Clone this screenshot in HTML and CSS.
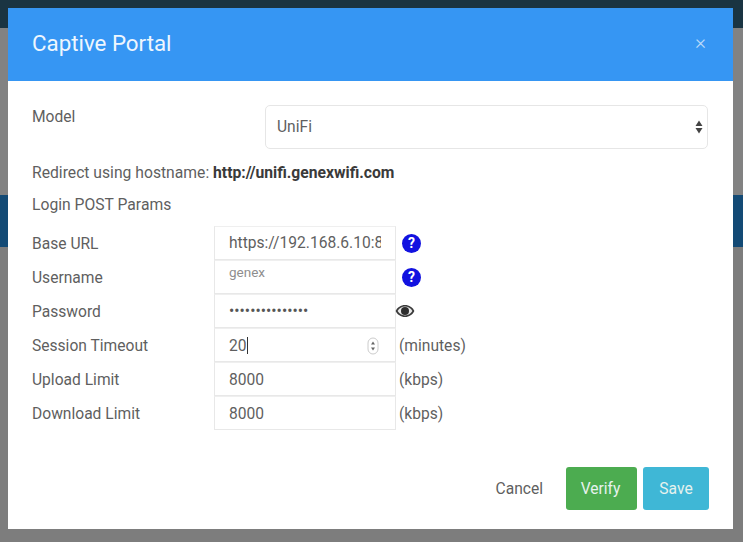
FILE: index.html
```html
<!DOCTYPE html>
<html lang="en">
<head>
<meta charset="utf-8">
<title>Captive Portal</title>
<link rel="stylesheet" href="styles.css">
</head>
<body>
<div class="backdrop">
  <div class="band band-top"></div>
  <div class="band band-gray"></div>
  <div class="band band-blue"></div>
  <div class="band band-rest"></div>
</div>
<div class="modal">
  <header class="modal-header">
    <h1 class="modal-title">Captive Portal</h1>
    <span class="close">×</span>
  </header>
  <div class="modal-body">
    <div class="model-row">
      <span class="model-label">Model</span>
      <div class="select"><span>UniFi</span>
        <svg class="select-arrows" width="8" height="14" viewBox="0 0 8 14"><path d="M4 0.5L7.5 6H0.5ZM4 13.5L0.5 8H7.5Z" fill="#444"/></svg>
      </div>
    </div>
    <p class="line redirect">Redirect using hostname: <b>http://unifi.genexwifi.com</b></p>
    <p class="line params">Login POST Params</p>
    <div class="grid">
      <span class="label">Base URL</span>
      <div class="field field-url"><span class="clip">https://192.168.6.10:8</span></div>
      <div class="after"><span class="help">?</span></div>

      <span class="label">Username</span>
      <div class="field field-user">genex</div>
      <div class="after"><span class="help">?</span></div>

      <span class="label">Password</span>
      <div class="field field-pass">•••••••••••••••</div>
      <div class="after after-eye">
        <svg width="20" height="14" viewBox="0 0 20 14"><path d="M10 1C5.8 1 2.3 3.4 0.6 7 2.3 10.6 5.8 13 10 13S17.7 10.6 19.4 7C17.7 3.4 14.2 1 10 1Z" fill="#3a3a3a"/><path d="M10 2.6C6.8 2.6 4.2 4.4 2.6 7 4.2 9.6 6.8 11.4 10 11.4S15.8 9.6 17.4 7C15.8 4.4 13.2 2.6 10 2.6Z" fill="#e8e8e8"/><circle cx="10" cy="7" r="4" fill="#2e2e2e"/></svg>
      </div>

      <span class="label">Session Timeout</span>
      <div class="field field-num">
        <span>20<i class="caret"></i></span>
        <span class="spin"><svg width="12" height="18" viewBox="0 0 12 18"><rect x="1" y="1" width="10" height="16" rx="5" fill="none" stroke="#ccc"/><path d="M6 4.5L8 7.5H4ZM6 13.5L4 10.5H8Z" fill="#666"/></svg></span>
      </div>
      <div class="after after-unit">(minutes)</div>

      <span class="label">Upload Limit</span>
      <div class="field">8000</div>
      <div class="after after-unit">(kbps)</div>

      <span class="label">Download Limit</span>
      <div class="field">8000</div>
      <div class="after after-unit">(kbps)</div>
    </div>
    <footer class="actions">
      <span class="cancel">Cancel</span>
      <span class="btn btn-verify">Verify</span>
      <span class="btn btn-save">Save</span>
    </footer>
  </div>
</div>
</body>
</html>
```
FILE: styles.css
```css
* { box-sizing: border-box; }
html, body { margin: 0; height: 100%; }
body { width: 743px; height: 542px; position: relative; overflow: hidden; font-family: Roboto, "Liberation Sans", sans-serif; color: #5f5f5f; font-size: 15.6px; }
.backdrop { display: flex; flex-direction: column; height: 542px; }
.band-top { height: 28px; background: #1a3442; }
.band-gray { height: 167px; background: #828282; }
.band-blue { height: 52px; background: #134a75; }
.band-rest { flex: 1; background: #7d7d7d; }
.modal { position: absolute; left: 8px; top: 8px; width: 725px; height: 521px; background: #fff; display: flex; flex-direction: column; }
.modal-header { height: 73px; background: #3696f3; display: flex; align-items: center; justify-content: space-between; padding: 0 27px 4px 24px; color: #fff; flex: none; }
.modal-title { margin: 0; font-size: 22.3px; font-weight: 400; color: #eef6fe; }
.close { font-size: 21px; font-weight: 300; color: #bcdcfa; line-height: 1; }
.modal-body { flex: 1; padding: 23px 25px 0 24px; display: flex; flex-direction: column; }
.model-row { display: flex; padding-top: 1px; }
.model-label { width: 233px; line-height: 20px; margin-top: 2px; }
.select { flex: 1; height: 44px; border: 1px solid #e6e6e6; border-radius: 5px; display: flex; align-items: center; justify-content: space-between; padding: 0 4px 0 11px; }
.select-arrows { display: block; }
.line { margin: 0; line-height: 20px; font-size: 15.7px; }
.redirect { margin-top: 14px; }
.redirect b { color: #3a3a3a; font-weight: 700; }
.params { margin-top: 12px; }
.grid { display: grid; grid-template-columns: 182px 182px auto; grid-auto-rows: 34px; margin-top: 11px; align-items: center; }
.label { line-height: 20px; padding-top: 1px; }
.field { height: 34px; border: 1px solid #e8e8e8; border-top-color: #efefef; padding: 1px 14px 0; display: flex; align-items: center; justify-content: space-between; background: #fff; }
.field-url { padding-top: 0; }
.clip { display: block; width: 100%; overflow: hidden; white-space: nowrap; }
.field-user { font-size: 13.5px; color: #8e8e8e; align-items: flex-start; padding-top: 3px; }
.field-pass { color: #555; padding-top: 0; letter-spacing: 0.03px; }
.caret { display: inline-block; width: 1px; height: 17px; background: #333; vertical-align: -3px; }
.spin { display: flex; margin-right: 2px; }
.after { display: flex; align-items: center; }
.after-unit { padding: 1px 0 0 3px; }
.after-eye { margin-left: -1px; }
.help { width: 19px; height: 19px; margin-left: 6px; border-radius: 50%; background: #1212e0; color: #fff; font-weight: 700; font-size: 14px; display: flex; align-items: center; justify-content: center; }
.actions { margin-top: 37px; display: flex; justify-content: flex-end; align-items: center; margin-right: -1px; }
.cancel { margin-right: 23px; }
.btn { height: 43px; border-radius: 3px; color: #e6f2ee; display: flex; align-items: center; justify-content: center; }
.btn-verify { width: 71px; background: #4cac50; margin-right: 6px; padding-right: 2px; }
.btn-save { width: 66px; background: #3fb7d6; }
```
